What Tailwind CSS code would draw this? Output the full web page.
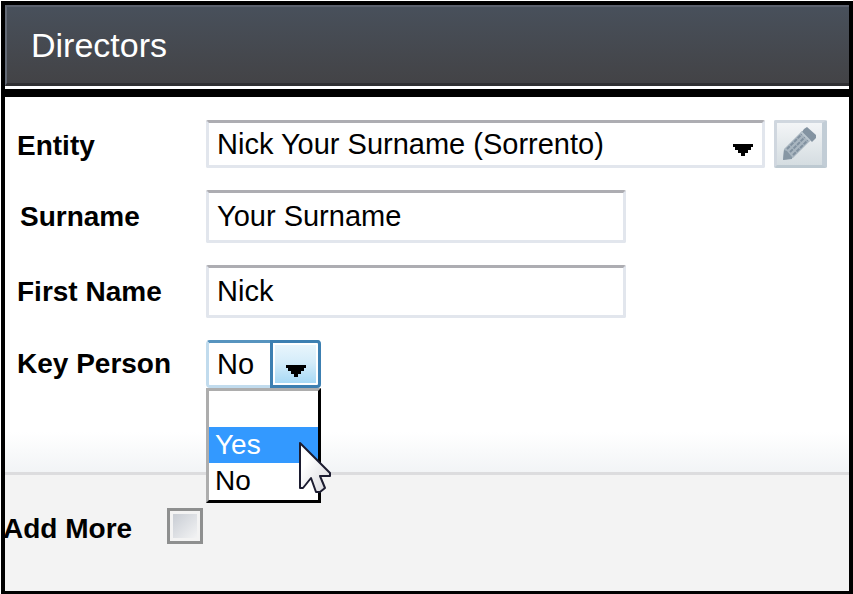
<!DOCTYPE html>
<html lang="en">
<head>
    <meta charset="UTF-8">
    <meta name="viewport" content="width=device-width, initial-scale=1.0">
    <title>Directors</title>
    <script src="https://cdn.jsdelivr.net/npm/@tailwindcss/browser@4"></script>
</head>
<body class="bg-white font-['Liberation_Sans',Arial,sans-serif] text-[28px] leading-9 text-black">
    <div class="min-h-screen p-px pr-0 flex flex-col">
        <div class="flex-1 flex flex-col border-4 border-black">
            <!-- Header -->
            <header class="h-[81px] pl-6 flex items-center border-l-2 border-t-2 border-b-3 border-l-[#626975] border-t-[#5b616d] border-b-[#303033] bg-linear-to-b from-[#48505b] to-[#434346]">
                <h1 class="text-[34px] leading-10 text-white">Directors</h1>
            </header>
            <div class="h-[11px] border-t-3 border-white bg-black"></div>

            <!-- Director form -->
            <form class="flex-1 flex flex-col">
                <div class="relative pt-[23px] pb-[84px] pl-3 pr-[22px] flex flex-col gap-[22px] border-b-3 border-[#dcdcde] bg-[linear-gradient(to_top,#f2f4f6,#ffffff_40px)]">
                    <div class="flex items-center">
                        <label for="entity" class="w-[189px] shrink-0 pt-1 font-bold">Entity</label>
                        <div class="relative flex-1">
                            <select id="entity" class="block w-full h-12 pl-2 pr-12 appearance-none rounded-xs border-3 border-[#e2e6ed] border-t-[#adadb2] bg-white text-[29px] leading-9">
                                <option>Nick Your Surname (Sorrento)</option>
                            </select>
                            <svg class="absolute right-3 top-6 w-5 h-3 pointer-events-none" viewBox="0 0 20 12"><path d="M0 0h20v3h-2v3h-3v3h-3v3H8V9H5V6H2V3H0z"/></svg>
                        </div>
                        <button type="button" aria-label="Edit entity" class="ml-[9px] w-[53px] h-12 rounded-xs border-3 border-[#d0d7df] border-r-[5px] border-r-[#c2cdd6] border-b-[#bdc9d1] bg-linear-to-b from-[#f3f5f7] to-[#d5dde1]">
                            <svg class="w-[45px] h-[42px]" viewBox="3 3 45 42">
                                <path d="M9 40l1-11L28 11l9 9-18 18z" fill="#a9b6c0"/>
                                <path d="M30 9l3-2 9 8v3l-4 4-10-10z" fill="#8393a1"/>
                                <path d="M9 40l1-10 3 1 5 6v2z" fill="#8797a4"/>
                                <path d="M13 29L29 13M16 32L32 16M19 35L35 19" fill="none" stroke="#8191a0" stroke-width="2" stroke-dasharray="4 1"/>
                                <path d="M27 12l9 9" stroke="#bac6ce" stroke-width="2"/>
                            </svg>
                        </button>
                    </div>

                    <div class="flex items-center">
                        <label for="surname" class="w-[189px] shrink-0 pl-[3px] font-bold">Surname</label>
                        <input id="surname" type="text" value="Your Surname" class="w-[420px] h-[53px] pl-2 rounded-xs border-3 border-[#e2e6ed] border-t-[#adadb2] bg-white text-[29px] leading-9">
                    </div>

                    <div class="flex items-center">
                        <label for="firstName" class="w-[189px] shrink-0 font-bold">First Name</label>
                        <input id="firstName" type="text" value="Nick" class="w-[420px] h-[53px] pl-2 rounded-xs border-3 border-[#e2e6ed] border-t-[#adadb2] bg-white text-[29px] leading-9">
                    </div>

                    <div class="flex items-center">
                        <label for="keyPerson" class="w-[189px] shrink-0 font-bold">Key Person</label>
                        <div class="relative w-[115px]">
                            <select id="keyPerson" class="block w-full h-12 pl-2 appearance-none rounded-sm border-3 border-[#c1dbed] border-t-[#5794bf] bg-white text-[29px] leading-9">
                                <option></option>
                                <option>Yes</option>
                                <option selected>No</option>
                            </select>
                            <!-- Arrow button -->
                            <div class="absolute right-0 top-0 w-[51px] h-12 rounded-r-sm border-3 border-[#3c7fb1] p-[2px] bg-white pointer-events-none">
                                <div class="h-full flex justify-center pt-5 bg-linear-to-b from-[#e8f5fc] from-0% via-[#d5edfa] via-45% to-[#a7d9f5]">
                                    <svg class="w-5 h-3" viewBox="0 0 20 12"><path d="M0 0h20v3h-2v3h-3v3h-3v3H8V9H5V6H2V3H0z"/></svg>
                                </div>
                            </div>
                            <!-- Open list -->
                            <ul role="listbox" aria-label="Key Person" class="absolute left-0 top-12 z-10 w-full border-3 border-t-[#adadad] border-l-[#adadad] border-r-black border-b-black bg-white">
                                <li role="option" class="h-9"></li>
                                <li role="option" class="h-9 pl-[6px] bg-[#3399ff] text-white">Yes</li>
                                <li role="option" aria-selected="true" class="h-[37px] pl-[6px]">No</li>
                            </ul>
                            <!-- Mouse pointer -->
                            <svg class="absolute left-[91px] top-[99px] z-20 w-9 h-14" viewBox="0 0 36 56">
                                <defs>
                                    <linearGradient id="pointer" x1="0" y1="0" x2="1" y2="1">
                                        <stop offset="0.3" stop-color="#fff"/>
                                        <stop offset="1" stop-color="#d5d5da"/>
                                    </linearGradient>
                                </defs>
                                <path d="M3 4v45h3l8-10 5 14h4l5-4-5-12h10v-3z" fill="url(#pointer)" stroke="#1c1c30" stroke-width="2" stroke-linejoin="round"/>
                            </svg>
                        </div>
                    </div>
                </div>

                <!-- Add more -->
                <div class="flex-1 pt-[33px] pb-11 flex items-start bg-[#f3f3f3]">
                    <label for="addMore" class="w-[162px] -ml-[2px] mr-[2px] pt-[3px] font-bold">Add More</label>
                    <input id="addMore" type="checkbox" class="w-9 h-9 appearance-none border-3 border-[#8e8f8f] bg-[#f4f4f4] p-[3px] bg-[linear-gradient(135deg,#c3c8d0,#f8f8f8)] bg-clip-content">
                </div>
            </form>
        </div>
    </div>
</body>
</html>
